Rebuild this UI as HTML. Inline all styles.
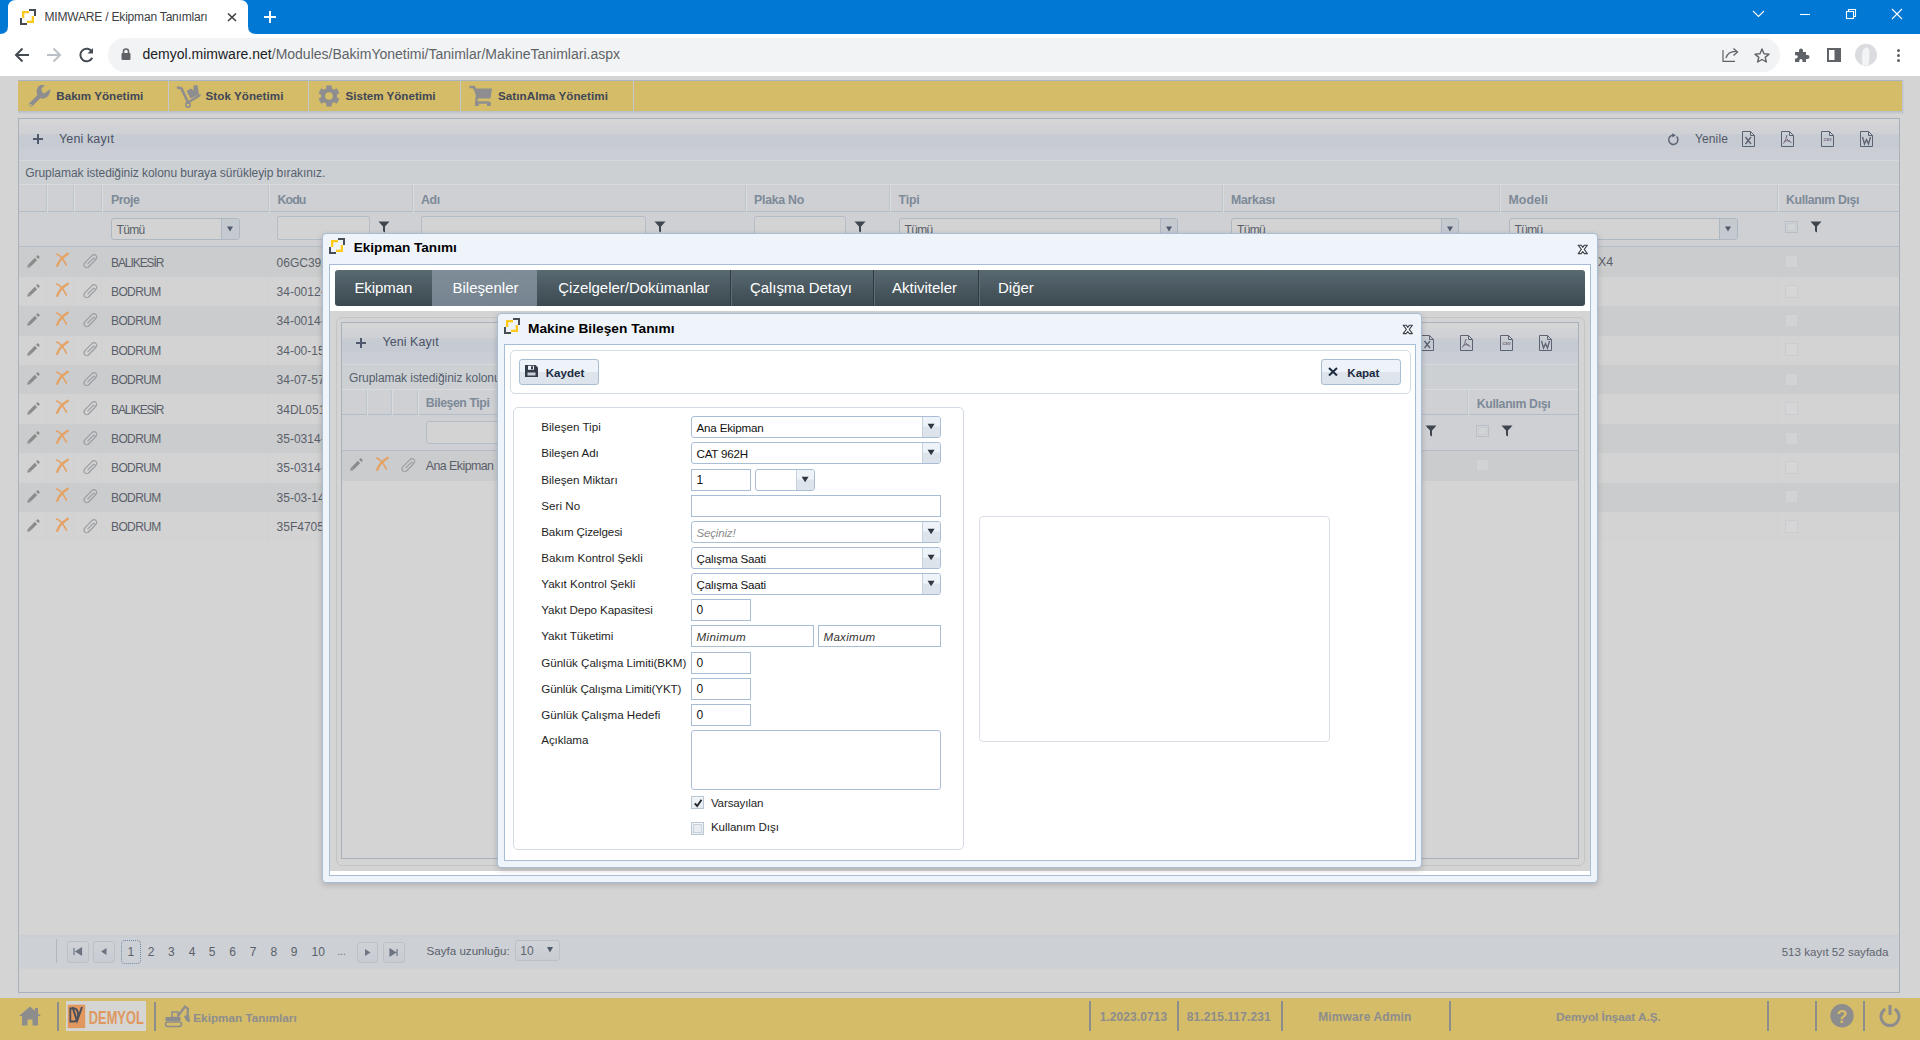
<!DOCTYPE html>
<html><head><meta charset="utf-8"><title>MIMWARE / Ekipman Tanımları</title>
<style>
*{box-sizing:border-box;margin:0;padding:0}
html,body{width:1920px;height:1040px;overflow:hidden;background:#d4d4d4;font-family:"Liberation Sans",sans-serif;position:relative}
.a{position:absolute}
.t{position:absolute;white-space:nowrap;line-height:1}
svg{overflow:visible}
</style></head><body>
<div class="a" style="left:0;top:0;width:1920px;height:34px;background:#0078d4"></div>
<svg class="a" style="left:0px;top:0px;" width="1920" height="76" viewBox="0 0 1920 76">
<path d="M0 34 Q8 34 8 26 L8 8 Q8 0 16 0 L240 0 Q248 0 248 8 L248 26 Q248 34 256 34 Z" fill="#fff"/>
<rect x="0" y="34" width="1920" height="42" fill="#fff"/>
<rect x="108" y="38" width="1672" height="34" rx="17" fill="#f1f3f4"/>
<g transform="translate(20,9)"><rect x="9" y="0" width="7" height="2" fill="#454a52"/><rect x="14" y="0" width="2" height="7" fill="#454a52"/><rect x="2" y="2" width="7" height="2.3" fill="#fdca1c"/><rect x="2" y="2" width="2.3" height="7" fill="#fdca1c"/><rect x="7" y="11.7" width="7" height="2.3" fill="#fdca1c"/><rect x="11.7" y="7" width="2.3" height="7" fill="#fdca1c"/><rect x="0" y="9" width="2" height="7" fill="#454a52"/><rect x="0" y="14" width="7" height="2" fill="#454a52"/></g>
<path d="M228 13.5 L236 21 M236 13.5 L228 21" stroke="#3c4043" stroke-width="1.6"/>
<path d="M270 11 V23 M264 17 H276" stroke="#fff" stroke-width="2"/>
<path d="M1753 11 L1758.5 16.5 L1764 11" stroke="#fff" stroke-width="1.1" fill="none"/>
<path d="M1800 14.5 H1810" stroke="#fff" stroke-width="1.1"/>
<rect x="1846.5" y="11.5" width="7" height="7" stroke="#fff" stroke-width="1.1" fill="none"/>
<path d="M1848.5 11.5 V9.5 H1855.5 V16.5 H1853.5" stroke="#fff" stroke-width="1.1" fill="none"/>
<path d="M1892 9 L1902 19 M1902 9 L1892 19" stroke="#fff" stroke-width="1.1"/>
<path d="M29 55 H16.5 M22.5 48.5 L16 55 L22.5 61.5" stroke="#454b52" stroke-width="2" fill="none"/>
<path d="M47 55 H59.5 M53.5 48.5 L60 55 L53.5 61.5" stroke="#bcc1c7" stroke-width="2" fill="none"/>
<path d="M92.2 52 A6.3 6.3 0 1 0 92.3 57.8" stroke="#454b52" stroke-width="2" fill="none"/>
<path d="M93 48 V53.5 H87.5 Z" fill="#454b52"/>
<rect x="121.5" y="53" width="9" height="7" rx="1" fill="#5f6368"/>
<path d="M123.5 53 V51.5 A2.5 2.5 0 0 1 128.5 51.5 V53" stroke="#5f6368" stroke-width="1.6" fill="none"/>
<path d="M1723 50 V61.3 H1735" stroke="#5f6368" stroke-width="1.2" fill="none"/>
<path d="M1726 58 Q1728 51 1737 51.5 M1733.5 48.5 L1737.5 52 L1733.5 55.5" stroke="#5f6368" stroke-width="1.3" fill="none"/>
<path d="M1762 49 L1764 53.7 L1769 54.1 L1765.2 57.4 L1766.4 62 L1762 59.5 L1757.6 62 L1758.8 57.4 L1755 54.1 L1760 53.7 Z" stroke="#5f6368" stroke-width="1.4" fill="none" stroke-linejoin="round"/>
<path d="M1795 52 H1799 V50.5 A1.8 1.8 0 0 1 1803 50.5 V52 H1806 V55 H1807.5 A1.8 1.8 0 0 1 1807.5 59 H1806 V62 H1802.5 V60.5 A1.6 1.6 0 0 0 1799.3 60.5 V62 H1795 V58.5 H1796.5 A1.7 1.7 0 0 0 1796.5 55.2 H1795 Z" fill="#5f6368"/>
<rect x="1828" y="49" width="12" height="12" stroke="#5f6368" stroke-width="2" fill="none"/>
<rect x="1834.5" y="48" width="6.5" height="14" fill="#5f6368"/>
<circle cx="1866" cy="54.8" r="11" fill="#dadcdf"/>
<path d="M1862.5 65 Q1861.5 58 1862.5 52 Q1863.5 47.5 1866.5 47.5 Q1869.5 48 1869.5 52 Q1869.5 57 1868.5 65 Z" fill="#f3f4f6"/>
<circle cx="1898.5" cy="50.6" r="1.5" fill="#5f6368"/>
<circle cx="1898.5" cy="55.5" r="1.5" fill="#5f6368"/>
<circle cx="1898.5" cy="60.5" r="1.5" fill="#5f6368"/>
</svg>
<div class="t " style="left:44.50px;top:10.84px;font-size:12px;color:#3c4043;font-weight:normal;font-style:normal;letter-spacing:-0.187px;">MIMWARE / Ekipman Tanımları</div>
<div class="t " style="left:142.50px;top:47.15px;font-size:14px;color:#202124;font-weight:normal;font-style:normal;letter-spacing:0.004px;">demyol.mimware.net<span style="color:#5f6368">/Modules/BakimYonetimi/Tanimlar/MakineTanimlari.aspx</span></div>
<div class="a" style="left:18px;top:80px;width:616px;height:1px;background:#a9b4c4"></div>
<div class="a" style="left:18px;top:81px;width:616px;height:30px;background:#d5bc69"></div>
<div class="a" style="left:18px;top:111px;width:616px;height:3px;background:linear-gradient(#b9bfc8,#cdd0d4)"></div>
<div class="a" style="left:168px;top:81px;width:1px;height:30px;background:#c3c7cf"></div>
<div class="a" style="left:308px;top:81px;width:1px;height:30px;background:#c3c7cf"></div>
<div class="a" style="left:460px;top:81px;width:1px;height:30px;background:#c3c7cf"></div>
<div class="a" style="left:633px;top:80px;width:1px;height:31px;background:#c3c7cf"></div>
<div class="a" style="left:634px;top:80px;width:1268px;height:1px;background:#a9b4c4"></div>
<div class="a" style="left:634px;top:81px;width:1268px;height:30px;background:#d5bc69"></div>
<div class="a" style="left:634px;top:111px;width:1268px;height:3px;background:linear-gradient(#b9bfc8,#cdd0d4)"></div>
<div class="a" style="left:1902px;top:80px;width:2px;height:34px;background:linear-gradient(90deg,#b9c0ca,#cfd2d6)"></div>
<div class="t " style="left:56.30px;top:90.18px;font-size:11.6px;color:#3f4657;font-weight:bold;font-style:normal;letter-spacing:0.016px;">Bakım Yönetimi</div>
<div class="t " style="left:205.50px;top:90.18px;font-size:11.6px;color:#3f4657;font-weight:bold;font-style:normal;letter-spacing:0.070px;">Stok Yönetimi</div>
<div class="t " style="left:345.50px;top:90.18px;font-size:11.6px;color:#3f4657;font-weight:bold;font-style:normal;letter-spacing:0.000px;">Sistem Yönetimi</div>
<div class="t " style="left:498.00px;top:90.18px;font-size:11.6px;color:#3f4657;font-weight:bold;font-style:normal;letter-spacing:0.074px;">SatınAlma Yönetimi</div>
<svg class="a" style="left:27px;top:84px;" width="24" height="24" viewBox="0 0 24 24"><path d="M4 20.5 L13 11.5" stroke="#8e8e90" stroke-width="4.2" stroke-linecap="round"/>
<circle cx="3.6" cy="21" r="1.1" fill="#d5bc69"/>
<path d="M11 13 L9.5 8 Q9.5 3 13.5 1 L18 1 L14.5 4.5 Q14.5 8.5 17 9.5 L23.5 5 Q23 11 19.5 13.5 Q16 15.5 13 14 Z" fill="#8e8e90"/></svg>
<svg class="a" style="left:177px;top:84px;" width="24" height="24" viewBox="0 0 24 24"><path d="M1 3.5 L4.5 4.5 L11 18.5" stroke="#8e8e90" stroke-width="2.6" fill="none" stroke-linecap="round"/>
<path d="M10 19 L22.5 11.5" stroke="#8e8e90" stroke-width="2.6" stroke-linecap="round"/>
<circle cx="11" cy="21" r="2.2" stroke="#8e8e90" stroke-width="1.6" fill="none"/>
<path d="M9.5 7 L14 4.5 L16.5 6.5 L16.5 1.5 L20.5 1 L22 10.5 L13.5 14.5 Z" fill="#8e8e90"/></svg>
<svg class="a" style="left:318px;top:84px;" width="22" height="24" viewBox="0 0 22 24"><g fill="#8e8e90"><circle cx="11" cy="12" r="8"/>
<rect x="8.2" y="1.5" width="5.6" height="21" />
<rect x="8.2" y="1.5" width="5.6" height="21" transform="rotate(60 11 12)"/>
<rect x="8.2" y="1.5" width="5.6" height="21" transform="rotate(-60 11 12)"/></g>
<circle cx="11" cy="12" r="3.8" fill="#d5bc69"/></svg>
<svg class="a" style="left:469px;top:85px;" width="24" height="22" viewBox="0 0 24 22"><path d="M0.5 2 H5 L6.5 6" stroke="#8e8e90" stroke-width="2.6" fill="none"/>
<path d="M5 3.5 H23 L21.5 13.5 H7.5 Z" fill="#8e8e90"/>
<path d="M7.5 12 V17.5 H20" stroke="#8e8e90" stroke-width="2.4" fill="none"/>
<rect x="6" y="17" width="3.8" height="4" fill="#8e8e90"/><rect x="18" y="17" width="3.8" height="4" fill="#8e8e90"/></svg>
<div class="a" style="left:18px;top:118px;width:1882px;height:875px;border:1px solid #a7b0bb;background:#d4d4d4"></div>
<div class="a" style="left:19px;top:119px;width:1880px;height:41px;background:linear-gradient(#d6d6d7 0,#d5d5d6 5px,#d0d2d5 7px,#cfd1d5 14px,#c7cbd2 16px,#c6cad2 28px,#cacdd4 30px,#cbced4 100%)"></div>
<div class="a" style="left:19px;top:160px;width:1880px;height:24px;background:#cdd0d3;border-top:1px solid #d6d7d8"></div>
<div class="a" style="left:19px;top:184px;width:1880px;height:28px;background:#cfd0d3;border-top:1px solid #d9dadb;border-bottom:1px solid #b3bdc8"></div>
<div class="a" style="left:19px;top:212px;width:1880px;height:35px;background:#cfd0d3;border-bottom:1px solid #b3bdc8"></div>
<svg class="a" style="left:32px;top:133px;" width="12" height="12" viewBox="0 0 12 12"><path d="M6 1 V11 M1 6 H11" stroke="#4f5a6e" stroke-width="2"/></svg>
<div class="t " style="left:59.00px;top:132.62px;font-size:12.5px;color:#4a5365;font-weight:normal;font-style:normal;letter-spacing:0.125px;">Yeni kayıt</div>
<svg class="a" style="left:1667px;top:133px;" width="13" height="13" viewBox="0 0 13 13"><path d="M9.6 3.6 A4.6 4.6 0 1 1 6.5 2.2" stroke="#5a6272" stroke-width="1.5" fill="none"/><path d="M5.2 0.2 L8.8 2.3 L5.4 4.6 Z" fill="#5a6272"/></svg>
<div class="t " style="left:1695.00px;top:133.04px;font-size:12px;color:#505869;font-weight:normal;font-style:normal;letter-spacing:0.122px;">Yenile</div>
<svg class="a" style="left:1741.5px;top:131px;" width="13" height="16" viewBox="0 0 13 16"><path d="M0.5 0.5 H8.5 L12.5 4.5 V15.5 H0.5 Z" stroke="#5b6373" stroke-width="1" fill="none"/><path d="M8.5 0.5 V4.5 H12.5" stroke="#5b6373" stroke-width="1" fill="none"/><path d="M3.5 6 L9 13 M9 6 L3.5 13" stroke="#5b6373" stroke-width="1.4"/></svg>
<svg class="a" style="left:1780.5px;top:131px;" width="13" height="16" viewBox="0 0 13 16"><path d="M0.5 0.5 H8.5 L12.5 4.5 V15.5 H0.5 Z" stroke="#5b6373" stroke-width="1" fill="none"/><path d="M8.5 0.5 V4.5 H12.5" stroke="#5b6373" stroke-width="1" fill="none"/><path d="M6 4 Q5 9 2.5 12.5 M6 8 Q7.5 11 10.5 11.5 M4 10 Q7 9.5 9 10" stroke="#6a5b70" stroke-width="0.9" fill="none"/></svg>
<svg class="a" style="left:1820.5px;top:131px;" width="13" height="16" viewBox="0 0 13 16"><path d="M0.5 0.5 H8.5 L12.5 4.5 V15.5 H0.5 Z" stroke="#5b6373" stroke-width="1" fill="none"/><path d="M8.5 0.5 V4.5 H12.5" stroke="#5b6373" stroke-width="1" fill="none"/><text x="6.5" y="10" font-size="4" text-anchor="middle" fill="#6a5b70" font-family="Liberation Sans" font-weight="bold">CSV</text></svg>
<svg class="a" style="left:1860px;top:131px;" width="13" height="16" viewBox="0 0 13 16"><path d="M0.5 0.5 H8.5 L12.5 4.5 V15.5 H0.5 Z" stroke="#5b6373" stroke-width="1" fill="none"/><path d="M8.5 0.5 V4.5 H12.5" stroke="#5b6373" stroke-width="1" fill="none"/><path d="M2.5 6 L4.5 13 L6.5 8.5 L8.5 13 L10.5 6" stroke="#5b6373" stroke-width="1.3" fill="none"/></svg>
<div class="t " style="left:25.30px;top:167.34px;font-size:12px;color:#55606e;font-weight:normal;font-style:normal;letter-spacing:-0.061px;">Gruplamak istediğiniz kolonu buraya sürükleyip bırakınız.</div>
<div class="a" style="left:46px;top:185px;width:1px;height:27px;background:#bdc5ce"></div>
<div class="a" style="left:47px;top:185px;width:1px;height:27px;background:#dadbdd"></div>
<div class="a" style="left:73px;top:185px;width:1px;height:27px;background:#bdc5ce"></div>
<div class="a" style="left:74px;top:185px;width:1px;height:27px;background:#dadbdd"></div>
<div class="a" style="left:101px;top:185px;width:1px;height:27px;background:#bdc5ce"></div>
<div class="a" style="left:102px;top:185px;width:1px;height:27px;background:#dadbdd"></div>
<div class="a" style="left:268px;top:185px;width:1px;height:27px;background:#bdc5ce"></div>
<div class="a" style="left:269px;top:185px;width:1px;height:27px;background:#dadbdd"></div>
<div class="a" style="left:412px;top:185px;width:1px;height:27px;background:#bdc5ce"></div>
<div class="a" style="left:413px;top:185px;width:1px;height:27px;background:#dadbdd"></div>
<div class="a" style="left:745px;top:185px;width:1px;height:27px;background:#bdc5ce"></div>
<div class="a" style="left:746px;top:185px;width:1px;height:27px;background:#dadbdd"></div>
<div class="a" style="left:889px;top:185px;width:1px;height:27px;background:#bdc5ce"></div>
<div class="a" style="left:890px;top:185px;width:1px;height:27px;background:#dadbdd"></div>
<div class="a" style="left:1222px;top:185px;width:1px;height:27px;background:#bdc5ce"></div>
<div class="a" style="left:1223px;top:185px;width:1px;height:27px;background:#dadbdd"></div>
<div class="a" style="left:1499px;top:185px;width:1px;height:27px;background:#bdc5ce"></div>
<div class="a" style="left:1500px;top:185px;width:1px;height:27px;background:#dadbdd"></div>
<div class="a" style="left:1777px;top:185px;width:1px;height:27px;background:#bdc5ce"></div>
<div class="a" style="left:1778px;top:185px;width:1px;height:27px;background:#dadbdd"></div>
<div class="t " style="left:111.00px;top:193.79px;font-size:12.3px;color:#7d8a98;font-weight:bold;font-style:normal;letter-spacing:-0.473px;">Proje</div>
<div class="t " style="left:277.50px;top:193.79px;font-size:12.3px;color:#7d8a98;font-weight:bold;font-style:normal;letter-spacing:-0.855px;">Kodu</div>
<div class="t " style="left:421.00px;top:193.79px;font-size:12.3px;color:#7d8a98;font-weight:bold;font-style:normal;letter-spacing:-0.271px;">Adı</div>
<div class="t " style="left:754.00px;top:193.79px;font-size:12.3px;color:#7d8a98;font-weight:bold;font-style:normal;letter-spacing:-0.244px;">Plaka No</div>
<div class="t " style="left:898.50px;top:193.79px;font-size:12.3px;color:#7d8a98;font-weight:bold;font-style:normal;letter-spacing:-0.160px;">Tipi</div>
<div class="t " style="left:1231.00px;top:193.79px;font-size:12.3px;color:#7d8a98;font-weight:bold;font-style:normal;letter-spacing:-0.259px;">Markası</div>
<div class="t " style="left:1508.50px;top:193.79px;font-size:12.3px;color:#7d8a98;font-weight:bold;font-style:normal;letter-spacing:0.091px;">Modeli</div>
<div class="t " style="left:1786.00px;top:193.79px;font-size:12.3px;color:#7d8a98;font-weight:bold;font-style:normal;letter-spacing:-0.377px;">Kullanım Dışı</div>
<div class="a" style="left:110.5px;top:217.5px;width:129.0px;height:22.0px;background:#d3d3d3;border:1px solid #aeb8c3;border-radius:3px"></div>
<div class="a" style="left:221px;top:218.5px;width:17.5px;height:20.0px;background:#c5c9d0;border-left:1px solid #aeb8c3;border-radius:0 2px 2px 0"></div>
<svg class="a" style="left:226.25px;top:224.5px;" width="8" height="8" viewBox="0 0 8 8"><path d="M1 1.5 H7 L4 6.5 Z" fill="#4f5a6a"/></svg>
<div class="t " style="left:116.50px;top:223.84px;font-size:12px;color:#5a5f6a;font-weight:normal;font-style:normal;letter-spacing:-0.672px;">Tümü</div>
<div class="a" style="left:277px;top:216px;width:92.5px;height:23.5px;background:#d3d3d3;border:1px solid #b4bcc6;border-radius:2px"></div>
<svg class="a" style="left:377.5px;top:221px;" width="12" height="12" viewBox="0 0 12 12"><path d="M0.5 0.5 H11.5 L7 5.5 V11.5 L5 10.3 V5.5 Z" fill="#3f4650"/></svg>
<div class="a" style="left:421px;top:216px;width:224.5px;height:23.5px;background:#d3d3d3;border:1px solid #b4bcc6;border-radius:2px"></div>
<svg class="a" style="left:653.5px;top:221px;" width="12" height="12" viewBox="0 0 12 12"><path d="M0.5 0.5 H11.5 L7 5.5 V11.5 L5 10.3 V5.5 Z" fill="#3f4650"/></svg>
<div class="a" style="left:753.5px;top:216px;width:92.5px;height:23.5px;background:#d3d3d3;border:1px solid #b4bcc6;border-radius:2px"></div>
<svg class="a" style="left:854px;top:221px;" width="12" height="12" viewBox="0 0 12 12"><path d="M0.5 0.5 H11.5 L7 5.5 V11.5 L5 10.3 V5.5 Z" fill="#3f4650"/></svg>
<div class="a" style="left:898.5px;top:217.5px;width:279.0px;height:22.0px;background:#d3d3d3;border:1px solid #aeb8c3;border-radius:3px"></div>
<div class="a" style="left:1159.5px;top:218.5px;width:17.0px;height:20.0px;background:#c5c9d0;border-left:1px solid #aeb8c3;border-radius:0 2px 2px 0"></div>
<svg class="a" style="left:1164.5px;top:224.5px;" width="8" height="8" viewBox="0 0 8 8"><path d="M1 1.5 H7 L4 6.5 Z" fill="#4f5a6a"/></svg>
<div class="t " style="left:904.50px;top:223.84px;font-size:12px;color:#5a5f6a;font-weight:normal;font-style:normal;letter-spacing:-0.672px;">Tümü</div>
<div class="a" style="left:1231px;top:217.5px;width:228px;height:22.0px;background:#d3d3d3;border:1px solid #aeb8c3;border-radius:3px"></div>
<div class="a" style="left:1441px;top:218.5px;width:17px;height:20.0px;background:#c5c9d0;border-left:1px solid #aeb8c3;border-radius:0 2px 2px 0"></div>
<svg class="a" style="left:1446.0px;top:224.5px;" width="8" height="8" viewBox="0 0 8 8"><path d="M1 1.5 H7 L4 6.5 Z" fill="#4f5a6a"/></svg>
<div class="t " style="left:1237.00px;top:223.84px;font-size:12px;color:#5a5f6a;font-weight:normal;font-style:normal;letter-spacing:-0.672px;">Tümü</div>
<div class="a" style="left:1508.5px;top:217.5px;width:229.0px;height:22.0px;background:#d3d3d3;border:1px solid #aeb8c3;border-radius:3px"></div>
<div class="a" style="left:1719px;top:218.5px;width:17.5px;height:20.0px;background:#c5c9d0;border-left:1px solid #aeb8c3;border-radius:0 2px 2px 0"></div>
<svg class="a" style="left:1724.25px;top:224.5px;" width="8" height="8" viewBox="0 0 8 8"><path d="M1 1.5 H7 L4 6.5 Z" fill="#4f5a6a"/></svg>
<div class="t " style="left:1514.50px;top:223.84px;font-size:12px;color:#5a5f6a;font-weight:normal;font-style:normal;letter-spacing:-0.672px;">Tümü</div>
<div class="a" style="left:1785px;top:220.5px;width:13px;height:12px;background:#cfd1d4;border:1px solid #b8bfc7"></div>
<div class="a" style="left:1787px;top:222.5px;width:9px;height:8px;border:1px solid #c6cbd1;background:#d2d4d6"></div>
<svg class="a" style="left:1809.5px;top:221px;" width="12" height="12" viewBox="0 0 12 12"><path d="M0.5 0.5 H11.5 L7 5.5 V11.5 L5 10.3 V5.5 Z" fill="#3f4650"/></svg>
<div class="a" style="left:19px;top:247px;width:1880px;height:30px;background:#cbcccd"></div>
<svg class="a" style="left:26.5px;top:254.5px;" width="13" height="13" viewBox="0 0 13 13"><path d="M2.6 10.4 L9 4" stroke="#8b8b8b" stroke-width="3.2"/><path d="M10.2 2.8 L11.8 1.2" stroke="#8b8b8b" stroke-width="3.2"/><path d="M0.2 12.8 L1.1 9.1 L3.9 11.9 Z" fill="#8b8b8b"/></svg>
<svg class="a" style="left:55px;top:253.0px;" width="14" height="14" viewBox="0 0 14 14"><path d="M2.2 12.8 Q4.5 6 12.8 0.8" stroke="#e5a265" stroke-width="2.3" fill="none" stroke-linecap="round"/><path d="M1.5 1 Q6 2 11.4 12" stroke="#e5a265" stroke-width="1.6" fill="none" stroke-linecap="round"/></svg>
<svg class="a" style="left:83px;top:254.0px;" width="16" height="15" viewBox="0 0 16 15"><g transform="translate(0.3,0) scale(1.07)"><path d="M4.3 12.6 L11.6 5.2 Q13.6 3 11.7 1.3 Q9.9 -0.3 7.8 1.8 L1.6 8 Q-0.3 10.2 1.4 12.1 Q3.2 13.8 5.3 11.8 L10.6 6.4 Q11.6 5.2 10.7 4.4 Q9.8 3.5 8.7 4.7 L4 9.4" stroke="#9a9da2" stroke-width="1.05" fill="none"/></g></svg>
<div class="t " style="left:111.00px;top:256.64px;font-size:12px;color:#5a606a;font-weight:normal;font-style:normal;letter-spacing:-1.070px;">BALIKESİR</div>
<div class="t " style="left:276.60px;top:256.64px;font-size:12px;color:#5a606a;font-weight:normal;font-style:normal;">06GC3921</div>
<div class="a" style="left:1785px;top:255.0px;width:13px;height:13px;background:#d2d3d4;border:1px solid #c8cbcf"></div>
<div class="a" style="left:19px;top:277px;width:1880px;height:29px;background:#d3d3d3"></div>
<div class="a" style="left:46px;top:277px;width:1px;height:29px;background:#d0d0d1"></div>
<div class="a" style="left:73px;top:277px;width:1px;height:29px;background:#d0d0d1"></div>
<div class="a" style="left:101px;top:277px;width:1px;height:29px;background:#d0d0d1"></div>
<div class="a" style="left:268px;top:277px;width:1px;height:29px;background:#d0d0d1"></div>
<div class="a" style="left:412px;top:277px;width:1px;height:29px;background:#d0d0d1"></div>
<div class="a" style="left:745px;top:277px;width:1px;height:29px;background:#d0d0d1"></div>
<div class="a" style="left:889px;top:277px;width:1px;height:29px;background:#d0d0d1"></div>
<div class="a" style="left:1222px;top:277px;width:1px;height:29px;background:#d0d0d1"></div>
<div class="a" style="left:1499px;top:277px;width:1px;height:29px;background:#d0d0d1"></div>
<div class="a" style="left:1777px;top:277px;width:1px;height:29px;background:#d0d0d1"></div>
<svg class="a" style="left:26.5px;top:284.0px;" width="13" height="13" viewBox="0 0 13 13"><path d="M2.6 10.4 L9 4" stroke="#8b8b8b" stroke-width="3.2"/><path d="M10.2 2.8 L11.8 1.2" stroke="#8b8b8b" stroke-width="3.2"/><path d="M0.2 12.8 L1.1 9.1 L3.9 11.9 Z" fill="#8b8b8b"/></svg>
<svg class="a" style="left:55px;top:282.5px;" width="14" height="14" viewBox="0 0 14 14"><path d="M2.2 12.8 Q4.5 6 12.8 0.8" stroke="#e5a265" stroke-width="2.3" fill="none" stroke-linecap="round"/><path d="M1.5 1 Q6 2 11.4 12" stroke="#e5a265" stroke-width="1.6" fill="none" stroke-linecap="round"/></svg>
<svg class="a" style="left:83px;top:283.5px;" width="16" height="15" viewBox="0 0 16 15"><g transform="translate(0.3,0) scale(1.07)"><path d="M4.3 12.6 L11.6 5.2 Q13.6 3 11.7 1.3 Q9.9 -0.3 7.8 1.8 L1.6 8 Q-0.3 10.2 1.4 12.1 Q3.2 13.8 5.3 11.8 L10.6 6.4 Q11.6 5.2 10.7 4.4 Q9.8 3.5 8.7 4.7 L4 9.4" stroke="#9a9da2" stroke-width="1.05" fill="none"/></g></svg>
<div class="t " style="left:111.00px;top:286.14px;font-size:12px;color:#5a606a;font-weight:normal;font-style:normal;letter-spacing:-0.607px;">BODRUM</div>
<div class="t " style="left:276.60px;top:286.14px;font-size:12px;color:#5a606a;font-weight:normal;font-style:normal;">34-0012-01</div>
<div class="a" style="left:1785px;top:284.5px;width:13px;height:13px;background:#d6d6d7;border:1px solid #c9ccd0"></div>
<div class="a" style="left:19px;top:306px;width:1880px;height:29.5px;background:#cbcccd"></div>
<svg class="a" style="left:26.5px;top:313.25px;" width="13" height="13" viewBox="0 0 13 13"><path d="M2.6 10.4 L9 4" stroke="#8b8b8b" stroke-width="3.2"/><path d="M10.2 2.8 L11.8 1.2" stroke="#8b8b8b" stroke-width="3.2"/><path d="M0.2 12.8 L1.1 9.1 L3.9 11.9 Z" fill="#8b8b8b"/></svg>
<svg class="a" style="left:55px;top:311.75px;" width="14" height="14" viewBox="0 0 14 14"><path d="M2.2 12.8 Q4.5 6 12.8 0.8" stroke="#e5a265" stroke-width="2.3" fill="none" stroke-linecap="round"/><path d="M1.5 1 Q6 2 11.4 12" stroke="#e5a265" stroke-width="1.6" fill="none" stroke-linecap="round"/></svg>
<svg class="a" style="left:83px;top:312.75px;" width="16" height="15" viewBox="0 0 16 15"><g transform="translate(0.3,0) scale(1.07)"><path d="M4.3 12.6 L11.6 5.2 Q13.6 3 11.7 1.3 Q9.9 -0.3 7.8 1.8 L1.6 8 Q-0.3 10.2 1.4 12.1 Q3.2 13.8 5.3 11.8 L10.6 6.4 Q11.6 5.2 10.7 4.4 Q9.8 3.5 8.7 4.7 L4 9.4" stroke="#9a9da2" stroke-width="1.05" fill="none"/></g></svg>
<div class="t " style="left:111.00px;top:315.39px;font-size:12px;color:#5a606a;font-weight:normal;font-style:normal;letter-spacing:-0.607px;">BODRUM</div>
<div class="t " style="left:276.60px;top:315.39px;font-size:12px;color:#5a606a;font-weight:normal;font-style:normal;">34-0014-01</div>
<div class="a" style="left:1785px;top:313.75px;width:13px;height:13px;background:#d2d3d4;border:1px solid #c8cbcf"></div>
<div class="a" style="left:19px;top:335.5px;width:1880px;height:29.5px;background:#d3d3d3"></div>
<div class="a" style="left:46px;top:335.5px;width:1px;height:29.5px;background:#d0d0d1"></div>
<div class="a" style="left:73px;top:335.5px;width:1px;height:29.5px;background:#d0d0d1"></div>
<div class="a" style="left:101px;top:335.5px;width:1px;height:29.5px;background:#d0d0d1"></div>
<div class="a" style="left:268px;top:335.5px;width:1px;height:29.5px;background:#d0d0d1"></div>
<div class="a" style="left:412px;top:335.5px;width:1px;height:29.5px;background:#d0d0d1"></div>
<div class="a" style="left:745px;top:335.5px;width:1px;height:29.5px;background:#d0d0d1"></div>
<div class="a" style="left:889px;top:335.5px;width:1px;height:29.5px;background:#d0d0d1"></div>
<div class="a" style="left:1222px;top:335.5px;width:1px;height:29.5px;background:#d0d0d1"></div>
<div class="a" style="left:1499px;top:335.5px;width:1px;height:29.5px;background:#d0d0d1"></div>
<div class="a" style="left:1777px;top:335.5px;width:1px;height:29.5px;background:#d0d0d1"></div>
<svg class="a" style="left:26.5px;top:342.75px;" width="13" height="13" viewBox="0 0 13 13"><path d="M2.6 10.4 L9 4" stroke="#8b8b8b" stroke-width="3.2"/><path d="M10.2 2.8 L11.8 1.2" stroke="#8b8b8b" stroke-width="3.2"/><path d="M0.2 12.8 L1.1 9.1 L3.9 11.9 Z" fill="#8b8b8b"/></svg>
<svg class="a" style="left:55px;top:341.25px;" width="14" height="14" viewBox="0 0 14 14"><path d="M2.2 12.8 Q4.5 6 12.8 0.8" stroke="#e5a265" stroke-width="2.3" fill="none" stroke-linecap="round"/><path d="M1.5 1 Q6 2 11.4 12" stroke="#e5a265" stroke-width="1.6" fill="none" stroke-linecap="round"/></svg>
<svg class="a" style="left:83px;top:342.25px;" width="16" height="15" viewBox="0 0 16 15"><g transform="translate(0.3,0) scale(1.07)"><path d="M4.3 12.6 L11.6 5.2 Q13.6 3 11.7 1.3 Q9.9 -0.3 7.8 1.8 L1.6 8 Q-0.3 10.2 1.4 12.1 Q3.2 13.8 5.3 11.8 L10.6 6.4 Q11.6 5.2 10.7 4.4 Q9.8 3.5 8.7 4.7 L4 9.4" stroke="#9a9da2" stroke-width="1.05" fill="none"/></g></svg>
<div class="t " style="left:111.00px;top:344.89px;font-size:12px;color:#5a606a;font-weight:normal;font-style:normal;letter-spacing:-0.607px;">BODRUM</div>
<div class="t " style="left:276.60px;top:344.89px;font-size:12px;color:#5a606a;font-weight:normal;font-style:normal;">34-00-1500</div>
<div class="a" style="left:1785px;top:343.25px;width:13px;height:13px;background:#d6d6d7;border:1px solid #c9ccd0"></div>
<div class="a" style="left:19px;top:365px;width:1880px;height:29px;background:#cbcccd"></div>
<svg class="a" style="left:26.5px;top:372.0px;" width="13" height="13" viewBox="0 0 13 13"><path d="M2.6 10.4 L9 4" stroke="#8b8b8b" stroke-width="3.2"/><path d="M10.2 2.8 L11.8 1.2" stroke="#8b8b8b" stroke-width="3.2"/><path d="M0.2 12.8 L1.1 9.1 L3.9 11.9 Z" fill="#8b8b8b"/></svg>
<svg class="a" style="left:55px;top:370.5px;" width="14" height="14" viewBox="0 0 14 14"><path d="M2.2 12.8 Q4.5 6 12.8 0.8" stroke="#e5a265" stroke-width="2.3" fill="none" stroke-linecap="round"/><path d="M1.5 1 Q6 2 11.4 12" stroke="#e5a265" stroke-width="1.6" fill="none" stroke-linecap="round"/></svg>
<svg class="a" style="left:83px;top:371.5px;" width="16" height="15" viewBox="0 0 16 15"><g transform="translate(0.3,0) scale(1.07)"><path d="M4.3 12.6 L11.6 5.2 Q13.6 3 11.7 1.3 Q9.9 -0.3 7.8 1.8 L1.6 8 Q-0.3 10.2 1.4 12.1 Q3.2 13.8 5.3 11.8 L10.6 6.4 Q11.6 5.2 10.7 4.4 Q9.8 3.5 8.7 4.7 L4 9.4" stroke="#9a9da2" stroke-width="1.05" fill="none"/></g></svg>
<div class="t " style="left:111.00px;top:374.14px;font-size:12px;color:#5a606a;font-weight:normal;font-style:normal;letter-spacing:-0.607px;">BODRUM</div>
<div class="t " style="left:276.60px;top:374.14px;font-size:12px;color:#5a606a;font-weight:normal;font-style:normal;">34-07-5700</div>
<div class="a" style="left:1785px;top:372.5px;width:13px;height:13px;background:#d2d3d4;border:1px solid #c8cbcf"></div>
<div class="a" style="left:19px;top:394px;width:1880px;height:30px;background:#d3d3d3"></div>
<div class="a" style="left:46px;top:394px;width:1px;height:30px;background:#d0d0d1"></div>
<div class="a" style="left:73px;top:394px;width:1px;height:30px;background:#d0d0d1"></div>
<div class="a" style="left:101px;top:394px;width:1px;height:30px;background:#d0d0d1"></div>
<div class="a" style="left:268px;top:394px;width:1px;height:30px;background:#d0d0d1"></div>
<div class="a" style="left:412px;top:394px;width:1px;height:30px;background:#d0d0d1"></div>
<div class="a" style="left:745px;top:394px;width:1px;height:30px;background:#d0d0d1"></div>
<div class="a" style="left:889px;top:394px;width:1px;height:30px;background:#d0d0d1"></div>
<div class="a" style="left:1222px;top:394px;width:1px;height:30px;background:#d0d0d1"></div>
<div class="a" style="left:1499px;top:394px;width:1px;height:30px;background:#d0d0d1"></div>
<div class="a" style="left:1777px;top:394px;width:1px;height:30px;background:#d0d0d1"></div>
<svg class="a" style="left:26.5px;top:401.5px;" width="13" height="13" viewBox="0 0 13 13"><path d="M2.6 10.4 L9 4" stroke="#8b8b8b" stroke-width="3.2"/><path d="M10.2 2.8 L11.8 1.2" stroke="#8b8b8b" stroke-width="3.2"/><path d="M0.2 12.8 L1.1 9.1 L3.9 11.9 Z" fill="#8b8b8b"/></svg>
<svg class="a" style="left:55px;top:400.0px;" width="14" height="14" viewBox="0 0 14 14"><path d="M2.2 12.8 Q4.5 6 12.8 0.8" stroke="#e5a265" stroke-width="2.3" fill="none" stroke-linecap="round"/><path d="M1.5 1 Q6 2 11.4 12" stroke="#e5a265" stroke-width="1.6" fill="none" stroke-linecap="round"/></svg>
<svg class="a" style="left:83px;top:401.0px;" width="16" height="15" viewBox="0 0 16 15"><g transform="translate(0.3,0) scale(1.07)"><path d="M4.3 12.6 L11.6 5.2 Q13.6 3 11.7 1.3 Q9.9 -0.3 7.8 1.8 L1.6 8 Q-0.3 10.2 1.4 12.1 Q3.2 13.8 5.3 11.8 L10.6 6.4 Q11.6 5.2 10.7 4.4 Q9.8 3.5 8.7 4.7 L4 9.4" stroke="#9a9da2" stroke-width="1.05" fill="none"/></g></svg>
<div class="t " style="left:111.00px;top:403.64px;font-size:12px;color:#5a606a;font-weight:normal;font-style:normal;letter-spacing:-1.070px;">BALIKESİR</div>
<div class="t " style="left:276.60px;top:403.64px;font-size:12px;color:#5a606a;font-weight:normal;font-style:normal;">34DL0510</div>
<div class="a" style="left:1785px;top:402.0px;width:13px;height:13px;background:#d6d6d7;border:1px solid #c9ccd0"></div>
<div class="a" style="left:19px;top:424px;width:1880px;height:29px;background:#cbcccd"></div>
<svg class="a" style="left:26.5px;top:431.0px;" width="13" height="13" viewBox="0 0 13 13"><path d="M2.6 10.4 L9 4" stroke="#8b8b8b" stroke-width="3.2"/><path d="M10.2 2.8 L11.8 1.2" stroke="#8b8b8b" stroke-width="3.2"/><path d="M0.2 12.8 L1.1 9.1 L3.9 11.9 Z" fill="#8b8b8b"/></svg>
<svg class="a" style="left:55px;top:429.5px;" width="14" height="14" viewBox="0 0 14 14"><path d="M2.2 12.8 Q4.5 6 12.8 0.8" stroke="#e5a265" stroke-width="2.3" fill="none" stroke-linecap="round"/><path d="M1.5 1 Q6 2 11.4 12" stroke="#e5a265" stroke-width="1.6" fill="none" stroke-linecap="round"/></svg>
<svg class="a" style="left:83px;top:430.5px;" width="16" height="15" viewBox="0 0 16 15"><g transform="translate(0.3,0) scale(1.07)"><path d="M4.3 12.6 L11.6 5.2 Q13.6 3 11.7 1.3 Q9.9 -0.3 7.8 1.8 L1.6 8 Q-0.3 10.2 1.4 12.1 Q3.2 13.8 5.3 11.8 L10.6 6.4 Q11.6 5.2 10.7 4.4 Q9.8 3.5 8.7 4.7 L4 9.4" stroke="#9a9da2" stroke-width="1.05" fill="none"/></g></svg>
<div class="t " style="left:111.00px;top:433.14px;font-size:12px;color:#5a606a;font-weight:normal;font-style:normal;letter-spacing:-0.607px;">BODRUM</div>
<div class="t " style="left:276.60px;top:433.14px;font-size:12px;color:#5a606a;font-weight:normal;font-style:normal;">35-0314-01</div>
<div class="a" style="left:1785px;top:431.5px;width:13px;height:13px;background:#d2d3d4;border:1px solid #c8cbcf"></div>
<div class="a" style="left:19px;top:453px;width:1880px;height:29.5px;background:#d3d3d3"></div>
<div class="a" style="left:46px;top:453px;width:1px;height:29.5px;background:#d0d0d1"></div>
<div class="a" style="left:73px;top:453px;width:1px;height:29.5px;background:#d0d0d1"></div>
<div class="a" style="left:101px;top:453px;width:1px;height:29.5px;background:#d0d0d1"></div>
<div class="a" style="left:268px;top:453px;width:1px;height:29.5px;background:#d0d0d1"></div>
<div class="a" style="left:412px;top:453px;width:1px;height:29.5px;background:#d0d0d1"></div>
<div class="a" style="left:745px;top:453px;width:1px;height:29.5px;background:#d0d0d1"></div>
<div class="a" style="left:889px;top:453px;width:1px;height:29.5px;background:#d0d0d1"></div>
<div class="a" style="left:1222px;top:453px;width:1px;height:29.5px;background:#d0d0d1"></div>
<div class="a" style="left:1499px;top:453px;width:1px;height:29.5px;background:#d0d0d1"></div>
<div class="a" style="left:1777px;top:453px;width:1px;height:29.5px;background:#d0d0d1"></div>
<svg class="a" style="left:26.5px;top:460.25px;" width="13" height="13" viewBox="0 0 13 13"><path d="M2.6 10.4 L9 4" stroke="#8b8b8b" stroke-width="3.2"/><path d="M10.2 2.8 L11.8 1.2" stroke="#8b8b8b" stroke-width="3.2"/><path d="M0.2 12.8 L1.1 9.1 L3.9 11.9 Z" fill="#8b8b8b"/></svg>
<svg class="a" style="left:55px;top:458.75px;" width="14" height="14" viewBox="0 0 14 14"><path d="M2.2 12.8 Q4.5 6 12.8 0.8" stroke="#e5a265" stroke-width="2.3" fill="none" stroke-linecap="round"/><path d="M1.5 1 Q6 2 11.4 12" stroke="#e5a265" stroke-width="1.6" fill="none" stroke-linecap="round"/></svg>
<svg class="a" style="left:83px;top:459.75px;" width="16" height="15" viewBox="0 0 16 15"><g transform="translate(0.3,0) scale(1.07)"><path d="M4.3 12.6 L11.6 5.2 Q13.6 3 11.7 1.3 Q9.9 -0.3 7.8 1.8 L1.6 8 Q-0.3 10.2 1.4 12.1 Q3.2 13.8 5.3 11.8 L10.6 6.4 Q11.6 5.2 10.7 4.4 Q9.8 3.5 8.7 4.7 L4 9.4" stroke="#9a9da2" stroke-width="1.05" fill="none"/></g></svg>
<div class="t " style="left:111.00px;top:462.39px;font-size:12px;color:#5a606a;font-weight:normal;font-style:normal;letter-spacing:-0.607px;">BODRUM</div>
<div class="t " style="left:276.60px;top:462.39px;font-size:12px;color:#5a606a;font-weight:normal;font-style:normal;">35-0314-02</div>
<div class="a" style="left:1785px;top:460.75px;width:13px;height:13px;background:#d6d6d7;border:1px solid #c9ccd0"></div>
<div class="a" style="left:19px;top:482.5px;width:1880px;height:29.5px;background:#cbcccd"></div>
<svg class="a" style="left:26.5px;top:489.75px;" width="13" height="13" viewBox="0 0 13 13"><path d="M2.6 10.4 L9 4" stroke="#8b8b8b" stroke-width="3.2"/><path d="M10.2 2.8 L11.8 1.2" stroke="#8b8b8b" stroke-width="3.2"/><path d="M0.2 12.8 L1.1 9.1 L3.9 11.9 Z" fill="#8b8b8b"/></svg>
<svg class="a" style="left:55px;top:488.25px;" width="14" height="14" viewBox="0 0 14 14"><path d="M2.2 12.8 Q4.5 6 12.8 0.8" stroke="#e5a265" stroke-width="2.3" fill="none" stroke-linecap="round"/><path d="M1.5 1 Q6 2 11.4 12" stroke="#e5a265" stroke-width="1.6" fill="none" stroke-linecap="round"/></svg>
<svg class="a" style="left:83px;top:489.25px;" width="16" height="15" viewBox="0 0 16 15"><g transform="translate(0.3,0) scale(1.07)"><path d="M4.3 12.6 L11.6 5.2 Q13.6 3 11.7 1.3 Q9.9 -0.3 7.8 1.8 L1.6 8 Q-0.3 10.2 1.4 12.1 Q3.2 13.8 5.3 11.8 L10.6 6.4 Q11.6 5.2 10.7 4.4 Q9.8 3.5 8.7 4.7 L4 9.4" stroke="#9a9da2" stroke-width="1.05" fill="none"/></g></svg>
<div class="t " style="left:111.00px;top:491.89px;font-size:12px;color:#5a606a;font-weight:normal;font-style:normal;letter-spacing:-0.607px;">BODRUM</div>
<div class="t " style="left:276.60px;top:491.89px;font-size:12px;color:#5a606a;font-weight:normal;font-style:normal;">35-03-1400</div>
<div class="a" style="left:1785px;top:490.25px;width:13px;height:13px;background:#d2d3d4;border:1px solid #c8cbcf"></div>
<div class="a" style="left:19px;top:512px;width:1880px;height:29px;background:#d3d3d3"></div>
<div class="a" style="left:46px;top:512px;width:1px;height:29px;background:#d0d0d1"></div>
<div class="a" style="left:73px;top:512px;width:1px;height:29px;background:#d0d0d1"></div>
<div class="a" style="left:101px;top:512px;width:1px;height:29px;background:#d0d0d1"></div>
<div class="a" style="left:268px;top:512px;width:1px;height:29px;background:#d0d0d1"></div>
<div class="a" style="left:412px;top:512px;width:1px;height:29px;background:#d0d0d1"></div>
<div class="a" style="left:745px;top:512px;width:1px;height:29px;background:#d0d0d1"></div>
<div class="a" style="left:889px;top:512px;width:1px;height:29px;background:#d0d0d1"></div>
<div class="a" style="left:1222px;top:512px;width:1px;height:29px;background:#d0d0d1"></div>
<div class="a" style="left:1499px;top:512px;width:1px;height:29px;background:#d0d0d1"></div>
<div class="a" style="left:1777px;top:512px;width:1px;height:29px;background:#d0d0d1"></div>
<svg class="a" style="left:26.5px;top:519.0px;" width="13" height="13" viewBox="0 0 13 13"><path d="M2.6 10.4 L9 4" stroke="#8b8b8b" stroke-width="3.2"/><path d="M10.2 2.8 L11.8 1.2" stroke="#8b8b8b" stroke-width="3.2"/><path d="M0.2 12.8 L1.1 9.1 L3.9 11.9 Z" fill="#8b8b8b"/></svg>
<svg class="a" style="left:55px;top:517.5px;" width="14" height="14" viewBox="0 0 14 14"><path d="M2.2 12.8 Q4.5 6 12.8 0.8" stroke="#e5a265" stroke-width="2.3" fill="none" stroke-linecap="round"/><path d="M1.5 1 Q6 2 11.4 12" stroke="#e5a265" stroke-width="1.6" fill="none" stroke-linecap="round"/></svg>
<svg class="a" style="left:83px;top:518.5px;" width="16" height="15" viewBox="0 0 16 15"><g transform="translate(0.3,0) scale(1.07)"><path d="M4.3 12.6 L11.6 5.2 Q13.6 3 11.7 1.3 Q9.9 -0.3 7.8 1.8 L1.6 8 Q-0.3 10.2 1.4 12.1 Q3.2 13.8 5.3 11.8 L10.6 6.4 Q11.6 5.2 10.7 4.4 Q9.8 3.5 8.7 4.7 L4 9.4" stroke="#9a9da2" stroke-width="1.05" fill="none"/></g></svg>
<div class="t " style="left:111.00px;top:521.14px;font-size:12px;color:#5a606a;font-weight:normal;font-style:normal;letter-spacing:-0.607px;">BODRUM</div>
<div class="t " style="left:276.60px;top:521.14px;font-size:12px;color:#5a606a;font-weight:normal;font-style:normal;">35F47050</div>
<div class="a" style="left:1785px;top:519.5px;width:13px;height:13px;background:#d6d6d7;border:1px solid #c9ccd0"></div>
<div class="t " style="left:1598.00px;top:256.30px;font-size:12.4px;color:#5a606a;font-weight:normal;font-style:normal;">X4</div>
<div class="a" style="left:19px;top:935px;width:1880px;height:34px;background:linear-gradient(#c9ced4,#cdd0d4 10%,#cdd0d4)"></div>
<div class="a" style="left:56px;top:939px;width:1px;height:24px;background:#b0b7bf"></div>
<div class="a" style="left:67px;top:941px;width:21.5px;height:21.5px;background:linear-gradient(#cfd2d6,#c8ccd3);border:1px solid #bac1c9;border-radius:3px"></div>
<svg class="a" style="left:67px;top:941px;" width="21.5" height="21.5" viewBox="0 0 21.5 21.5"><path d="M7 7 V14 M14.5 7 L9 10.5 L14.5 14 Z" stroke="#6d7582" stroke-width="1.2" fill="#6d7582"/></svg>
<div class="a" style="left:93px;top:941px;width:21.5px;height:21.5px;background:linear-gradient(#cfd2d6,#c8ccd3);border:1px solid #bac1c9;border-radius:3px"></div>
<svg class="a" style="left:93px;top:941px;" width="21.5" height="21.5" viewBox="0 0 21.5 21.5"><path d="M13.5 7 L8 10.5 L13.5 14 Z" fill="#6d7582"/></svg>
<div class="a" style="left:120.5px;top:940px;width:20.5px;height:23.5px;border:1px dotted #6e8aa8;border-radius:4px"></div>
<div class="t " style="left:127.45px;top:945.64px;font-size:12px;color:#5a606b;font-weight:normal;font-style:normal;">1</div>
<div class="t " style="left:147.65px;top:945.64px;font-size:12px;color:#5a606b;font-weight:normal;font-style:normal;">2</div>
<div class="t " style="left:168.05px;top:945.64px;font-size:12px;color:#5a606b;font-weight:normal;font-style:normal;">3</div>
<div class="t " style="left:188.65px;top:945.64px;font-size:12px;color:#5a606b;font-weight:normal;font-style:normal;">4</div>
<div class="t " style="left:208.65px;top:945.64px;font-size:12px;color:#5a606b;font-weight:normal;font-style:normal;">5</div>
<div class="t " style="left:229.35px;top:945.64px;font-size:12px;color:#5a606b;font-weight:normal;font-style:normal;">6</div>
<div class="t " style="left:249.65px;top:945.64px;font-size:12px;color:#5a606b;font-weight:normal;font-style:normal;">7</div>
<div class="t " style="left:270.40px;top:945.64px;font-size:12px;color:#5a606b;font-weight:normal;font-style:normal;">8</div>
<div class="t " style="left:290.65px;top:945.64px;font-size:12px;color:#5a606b;font-weight:normal;font-style:normal;">9</div>
<div class="t " style="left:311.60px;top:945.64px;font-size:12px;color:#5a606b;font-weight:normal;font-style:normal;">10</div>
<div class="t " style="left:337.50px;top:947.33px;font-size:10px;color:#6a6f78;font-weight:normal;font-style:normal;">...</div>
<div class="a" style="left:357.3px;top:941.5px;width:21px;height:21px;background:linear-gradient(#cfd2d6,#c8ccd3);border:1px solid #bac1c9;border-radius:3px"></div>
<svg class="a" style="left:357.3px;top:941.5px;" width="21" height="21" viewBox="0 0 21 21"><path d="M8 7 L13.5 10.5 L8 14 Z" fill="#6d7582"/></svg>
<div class="a" style="left:383.3px;top:941.5px;width:21.5px;height:21px;background:linear-gradient(#cfd2d6,#c8ccd3);border:1px solid #bac1c9;border-radius:3px"></div>
<svg class="a" style="left:383.3px;top:941.5px;" width="21.5" height="21" viewBox="0 0 21.5 21"><path d="M7 7 L12.5 10.5 L7 14 Z M14 7 V14" stroke="#6d7582" stroke-width="1.2" fill="#6d7582"/></svg>
<div class="t " style="left:426.60px;top:944.88px;font-size:11.6px;color:#5a606b;font-weight:normal;font-style:normal;letter-spacing:-0.010px;">Sayfa uzunluğu:</div>
<div class="a" style="left:514.5px;top:939.5px;width:45px;height:21px;background:linear-gradient(#d0d3d7,#c9cdd3);border:1px solid #bac1c9;border-radius:3px"></div>
<div class="t " style="left:520.30px;top:944.84px;font-size:12px;color:#5f6570;font-weight:normal;font-style:normal;">10</div>
<svg class="a" style="left:546px;top:946px;" width="8" height="8" viewBox="0 0 8 8"><path d="M1 1 H7 L4 6.5 Z" fill="#4f5a6a"/></svg>
<div class="t " style="left:1781.70px;top:946.18px;font-size:11.6px;color:#5f6570;font-weight:normal;font-style:normal;letter-spacing:-0.015px;">513 kayıt 52 sayfada</div>
<div class="a" style="left:0px;top:997px;width:1920px;height:1px;background:#d3d4d8"></div>
<div class="a" style="left:0px;top:998px;width:1920px;height:42px;background:#d5bc69"></div>
<svg class="a" style="left:18px;top:1005px;" width="24" height="22" viewBox="0 0 24 22"><path d="M12 1.5 L1 11 H4 V20.5 H9.5 V14.5 H14.5 V20.5 H20 V11 H23 Z" fill="#8d8d8d"/><rect x="17" y="3" width="3" height="5" fill="#8d8d8d"/></svg>
<div class="a" style="left:56.5px;top:1001.5px;width:2px;height:29.0px;background:#8d8d8d"></div>
<div class="a" style="left:154px;top:1001.5px;width:2px;height:29.0px;background:#8d8d8d"></div>
<div class="a" style="left:1088.5px;top:1001px;width:2px;height:30px;background:#8d8d8d"></div>
<div class="a" style="left:1177px;top:1001px;width:2px;height:30px;background:#8d8d8d"></div>
<div class="a" style="left:1280.5px;top:1001px;width:2px;height:30px;background:#8d8d8d"></div>
<div class="a" style="left:1448.5px;top:1001px;width:2px;height:30px;background:#8d8d8d"></div>
<div class="a" style="left:1766.5px;top:1001px;width:2px;height:30px;background:#8d8d8d"></div>
<div class="a" style="left:1814.5px;top:1001px;width:2px;height:30px;background:#8d8d8d"></div>
<div class="a" style="left:1862.5px;top:1001px;width:2px;height:30px;background:#8d8d8d"></div>
<div class="a" style="left:66px;top:1000.5px;width:80px;height:30.5px;background:#d5d5d4"></div>
<svg class="a" style="left:66px;top:1000.5px;" width="80" height="30.5" viewBox="0 0 80 30.5"><rect x="1.7" y="3.7" width="17.5" height="23.4" fill="#e0985e"/>
<path d="M4.3 7.5 H8 Q12 7.5 12 14 Q12 20.5 8 20.5 H4.3 Z" stroke="#4a4f5c" stroke-width="1.8" fill="none"/>
<path d="M6.5 6 L11 20 L16 6" stroke="#4a4f5c" stroke-width="2" fill="none"/>
<text x="22.8" y="23.4" font-family="Liberation Sans" font-weight="bold" font-size="19" fill="#e0985e" textLength="55" lengthAdjust="spacingAndGlyphs">DEMYOL</text></svg>
<svg class="a" style="left:165px;top:1005px;" width="25" height="22" viewBox="0 0 25 22"><rect x="0.5" y="17" width="16" height="4.5" rx="2.2" stroke="#8d8d8d" stroke-width="1.5" fill="none"/>
<rect x="0.5" y="12" width="15" height="4" fill="#8d8d8d"/><rect x="7" y="7" width="6" height="5.5" stroke="#8d8d8d" stroke-width="1.5" fill="none"/>
<path d="M13 11 L20 1.5 L23 4 L22.5 10" stroke="#8d8d8d" stroke-width="2.2" fill="none"/><path d="M19 11 Q21 17.5 25 17 L24 9.5 Z" fill="#8d8d8d"/></svg>
<div class="t " style="left:193.30px;top:1011.80px;font-size:11.7px;color:#8d8d8d;font-weight:bold;font-style:normal;letter-spacing:0.020px;">Ekipman Tanımları</div>
<div class="t " style="left:1099.70px;top:1010.84px;font-size:12px;color:#8d8d8d;font-weight:bold;font-style:normal;letter-spacing:0.070px;">1.2023.0713</div>
<div class="t " style="left:1186.70px;top:1010.84px;font-size:12px;color:#8d8d8d;font-weight:bold;font-style:normal;letter-spacing:0.088px;">81.215.117.231</div>
<div class="t " style="left:1318.20px;top:1010.84px;font-size:12px;color:#8d8d8d;font-weight:bold;font-style:normal;letter-spacing:0.132px;">Mimware Admin</div>
<div class="t " style="left:1556.00px;top:1011.51px;font-size:11.8px;color:#8d8d8d;font-weight:bold;font-style:normal;letter-spacing:-0.060px;">Demyol İnşaat A.Ş.</div>
<svg class="a" style="left:1830px;top:1004px;" width="24" height="24" viewBox="0 0 24 24"><circle cx="12" cy="11.7" r="11.7" fill="#8d8d8d"/><text x="12" y="18.5" text-anchor="middle" font-family="Liberation Sans" font-weight="bold" font-size="18" fill="#d5bc69">?</text></svg>
<svg class="a" style="left:1878px;top:1004px;" width="24" height="24" viewBox="0 0 24 24"><path d="M7.2 5 A9 9 0 1 0 16.8 5" stroke="#8d8d8d" stroke-width="3" fill="none"/><path d="M12 1 V11" stroke="#8d8d8d" stroke-width="3"/></svg>
<div class="a" style="left:322px;top:233px;width:1276px;height:649.5px;background:#eff4fa;border:1px solid #a7bdd6;border-radius:4px;box-shadow:0 2px 6px rgba(0,0,0,0.18)"></div>
<svg class="a" style="left:329px;top:238px;" width="16" height="16" viewBox="0 0 16 16"><rect x="9" y="0" width="7" height="2" fill="#474d55"/><rect x="14" y="0" width="2" height="7" fill="#474d55"/><rect x="2" y="2" width="7" height="2.3" fill="#fdca1c"/><rect x="2" y="2" width="2.3" height="7" fill="#fdca1c"/><rect x="7" y="11.7" width="7" height="2.3" fill="#fdca1c"/><rect x="11.7" y="7" width="2.3" height="7" fill="#fdca1c"/><rect x="0" y="9" width="2" height="7" fill="#474d55"/><rect x="0" y="14" width="7" height="2" fill="#474d55"/></svg>
<div class="t " style="left:353.75px;top:241.49px;font-size:13.6px;color:#000;font-weight:bold;font-style:normal;letter-spacing:-0.017px;">Ekipman Tanımı</div>
<svg class="a" style="left:1576.5px;top:243.5px;" width="12" height="11" viewBox="0 0 12 11"><path d="M1.2 1.2 H4.2 L5.8 3.3 L7.4 1.2 H10.4 L7.2 5.4 L10.4 9.6 H7.4 L5.8 7.5 L4.2 9.6 H1.2 L4.4 5.4 Z" stroke="#3d434b" stroke-width="1.1" fill="#fff" stroke-linejoin="round"/></svg>
<div class="a" style="left:329px;top:264px;width:1262px;height:612px;background:#fff;border:1px solid #a7bdd6"></div>
<div class="a" style="left:335px;top:270px;width:1250px;height:36px;background:linear-gradient(#5a6a72,#4a5960 50%,#3b4850);border-radius:3px"></div>
<div class="a" style="left:432px;top:270px;width:105px;height:36px;background:linear-gradient(#7d8c97,#7a8994 50%,#74838f)"></div>
<div class="a" style="left:729.5px;top:270px;width:1px;height:36px;background:#2f3a40"></div>
<div class="a" style="left:730.5px;top:270px;width:1px;height:36px;background:#5e6d75"></div>
<div class="a" style="left:872.5px;top:270px;width:1px;height:36px;background:#2f3a40"></div>
<div class="a" style="left:873.5px;top:270px;width:1px;height:36px;background:#5e6d75"></div>
<div class="a" style="left:977.5px;top:270px;width:1px;height:36px;background:#2f3a40"></div>
<div class="a" style="left:978.5px;top:270px;width:1px;height:36px;background:#5e6d75"></div>
<div class="t " style="left:354.40px;top:280.40px;font-size:15px;color:#fff;font-weight:normal;font-style:normal;letter-spacing:-0.051px;">Ekipman</div>
<div class="t " style="left:452.50px;top:280.40px;font-size:15px;color:#fff;font-weight:normal;font-style:normal;letter-spacing:0.013px;">Bileşenler</div>
<div class="t " style="left:558.30px;top:280.40px;font-size:15px;color:#fff;font-weight:normal;font-style:normal;letter-spacing:-0.021px;">Çizelgeler/Dokümanlar</div>
<div class="t " style="left:749.90px;top:280.40px;font-size:15px;color:#fff;font-weight:normal;font-style:normal;letter-spacing:-0.039px;">Çalışma Detayı</div>
<div class="t " style="left:892.00px;top:280.40px;font-size:15px;color:#fff;font-weight:normal;font-style:normal;letter-spacing:-0.003px;">Aktiviteler</div>
<div class="t " style="left:998.00px;top:280.40px;font-size:15px;color:#fff;font-weight:normal;font-style:normal;letter-spacing:-0.012px;">Diğer</div>
<div class="a" style="left:330px;top:311px;width:1260px;height:560px;background:#d4d4d4"></div>
<div class="a" style="left:335.5px;top:316.5px;width:1249px;height:549px;border:1px solid #c4c4c4;border-radius:6px"></div>
<div class="a" style="left:341px;top:322px;width:1238px;height:537px;border:1px solid #a7b0bb;background:#d4d4d4"></div>
<div class="a" style="left:342px;top:323px;width:1236px;height:41px;background:linear-gradient(#d6d6d7 0,#d5d5d6 5px,#d0d2d5 7px,#cfd1d5 14px,#c7cbd2 16px,#c6cad2 28px,#cacdd4 30px,#cbced4 100%)"></div>
<div class="a" style="left:342px;top:364px;width:1236px;height:25px;background:#cdd0d3;border-top:1px solid #d6d7d8"></div>
<div class="a" style="left:342px;top:389px;width:1236px;height:26px;background:#cfd0d3;border-top:1px solid #d9dadb;border-bottom:1px solid #b3bdc8"></div>
<div class="a" style="left:342px;top:415px;width:1236px;height:35.5px;background:#cfd0d3;border-bottom:1px solid #b3bdc8"></div>
<svg class="a" style="left:355px;top:337px;" width="12" height="12" viewBox="0 0 12 12"><path d="M6 1 V11 M1 6 H11" stroke="#4f5a6e" stroke-width="2"/></svg>
<div class="t " style="left:382.40px;top:336.32px;font-size:12.5px;color:#4a5365;font-weight:normal;font-style:normal;letter-spacing:0.056px;">Yeni Kayıt</div>
<div class="t " style="left:348.90px;top:371.84px;font-size:12px;color:#55606e;font-weight:normal;font-style:normal;letter-spacing:-0.061px;">Gruplamak istediğiniz kolonu buraya sürükleyip bırakınız.</div>
<div class="a" style="left:366px;top:390px;width:1px;height:25px;background:#bdc5ce"></div>
<div class="a" style="left:367px;top:390px;width:1px;height:25px;background:#dadbdd"></div>
<div class="a" style="left:391px;top:390px;width:1px;height:25px;background:#bdc5ce"></div>
<div class="a" style="left:392px;top:390px;width:1px;height:25px;background:#dadbdd"></div>
<div class="a" style="left:416.5px;top:390px;width:1px;height:25px;background:#bdc5ce"></div>
<div class="a" style="left:417.5px;top:390px;width:1px;height:25px;background:#dadbdd"></div>
<div class="a" style="left:1467px;top:390px;width:1px;height:25px;background:#bdc5ce"></div>
<div class="a" style="left:1468px;top:390px;width:1px;height:25px;background:#dadbdd"></div>
<div class="t " style="left:425.70px;top:397.39px;font-size:12.3px;color:#7d8a98;font-weight:bold;font-style:normal;letter-spacing:-0.425px;">Bileşen Tipi</div>
<div class="t " style="left:1476.70px;top:397.99px;font-size:12.3px;color:#7d8a98;font-weight:bold;font-style:normal;letter-spacing:-0.324px;">Kullanım Dışı</div>
<div class="a" style="left:425.5px;top:421px;width:100px;height:22.5px;background:#d3d3d3;border:1px solid #b4bcc6;border-radius:3px"></div>
<svg class="a" style="left:1424.5px;top:425px;" width="12" height="12" viewBox="0 0 12 12"><path d="M0.5 0.5 H11.5 L7 5.5 V11.5 L5 10.3 V5.5 Z" fill="#3f4650"/></svg>
<div class="a" style="left:1475.5px;top:424.5px;width:13px;height:12.5px;background:#cfd1d4;border:1px solid #b8bfc7"></div>
<div class="a" style="left:1477.5px;top:426.5px;width:9px;height:8.5px;border:1px solid #c6cbd1;background:#d2d4d6"></div>
<svg class="a" style="left:1500.5px;top:425px;" width="12" height="12" viewBox="0 0 12 12"><path d="M0.5 0.5 H11.5 L7 5.5 V11.5 L5 10.3 V5.5 Z" fill="#3f4650"/></svg>
<svg class="a" style="left:1421px;top:334.5px;" width="13" height="16" viewBox="0 0 13 16"><path d="M0.5 0.5 H8.5 L12.5 4.5 V15.5 H0.5 Z" stroke="#5b6373" stroke-width="1" fill="none"/><path d="M8.5 0.5 V4.5 H12.5" stroke="#5b6373" stroke-width="1" fill="none"/><path d="M3.5 6 L9 13 M9 6 L3.5 13" stroke="#5b6373" stroke-width="1.4"/></svg>
<svg class="a" style="left:1460px;top:334.5px;" width="13" height="16" viewBox="0 0 13 16"><path d="M0.5 0.5 H8.5 L12.5 4.5 V15.5 H0.5 Z" stroke="#5b6373" stroke-width="1" fill="none"/><path d="M8.5 0.5 V4.5 H12.5" stroke="#5b6373" stroke-width="1" fill="none"/><path d="M6 4 Q5 9 2.5 12.5 M6 8 Q7.5 11 10.5 11.5 M4 10 Q7 9.5 9 10" stroke="#6a5b70" stroke-width="0.9" fill="none"/></svg>
<svg class="a" style="left:1499.5px;top:334.5px;" width="13" height="16" viewBox="0 0 13 16"><path d="M0.5 0.5 H8.5 L12.5 4.5 V15.5 H0.5 Z" stroke="#5b6373" stroke-width="1" fill="none"/><path d="M8.5 0.5 V4.5 H12.5" stroke="#5b6373" stroke-width="1" fill="none"/><text x="6.5" y="10" font-size="4" text-anchor="middle" fill="#6a5b70" font-family="Liberation Sans" font-weight="bold">CSV</text></svg>
<svg class="a" style="left:1538.5px;top:334.5px;" width="13" height="16" viewBox="0 0 13 16"><path d="M0.5 0.5 H8.5 L12.5 4.5 V15.5 H0.5 Z" stroke="#5b6373" stroke-width="1" fill="none"/><path d="M8.5 0.5 V4.5 H12.5" stroke="#5b6373" stroke-width="1" fill="none"/><path d="M2.5 6 L4.5 13 L6.5 8.5 L8.5 13 L10.5 6" stroke="#5b6373" stroke-width="1.3" fill="none"/></svg>
<div class="a" style="left:342px;top:450.5px;width:1236px;height:30.5px;background:#cbcccd"></div>
<svg class="a" style="left:349.5px;top:458px;" width="13" height="13" viewBox="0 0 13 13"><path d="M2.6 10.4 L9 4" stroke="#8b8b8b" stroke-width="3.2"/><path d="M10.2 2.8 L11.8 1.2" stroke="#8b8b8b" stroke-width="3.2"/><path d="M0.2 12.8 L1.1 9.1 L3.9 11.9 Z" fill="#8b8b8b"/></svg>
<svg class="a" style="left:375px;top:456.5px;" width="14" height="14" viewBox="0 0 14 14"><path d="M2.2 12.8 Q4.5 6 12.8 0.8" stroke="#e5a265" stroke-width="2.3" fill="none" stroke-linecap="round"/><path d="M1.5 1 Q6 2 11.4 12" stroke="#e5a265" stroke-width="1.6" fill="none" stroke-linecap="round"/></svg>
<svg class="a" style="left:401px;top:458px;" width="16" height="15" viewBox="0 0 16 15"><g transform="translate(0.3,0) scale(1.07)"><path d="M4.3 12.6 L11.6 5.2 Q13.6 3 11.7 1.3 Q9.9 -0.3 7.8 1.8 L1.6 8 Q-0.3 10.2 1.4 12.1 Q3.2 13.8 5.3 11.8 L10.6 6.4 Q11.6 5.2 10.7 4.4 Q9.8 3.5 8.7 4.7 L4 9.4" stroke="#9a9da2" stroke-width="1.05" fill="none"/></g></svg>
<div class="t " style="left:425.70px;top:459.70px;font-size:12.4px;color:#5a606a;font-weight:normal;font-style:normal;letter-spacing:-0.537px;">Ana Ekipman</div>
<div class="a" style="left:1475.5px;top:458.5px;width:13px;height:12.5px;background:#d2d3d4;border:1px solid #c8cbcf"></div>
<div class="a" style="left:497px;top:313px;width:925px;height:554.5px;background:#eff4fa;border:1px solid #a7bdd6;border-radius:4px;box-shadow:0 2px 6px rgba(0,0,0,0.18)"></div>
<svg class="a" style="left:504px;top:318px;" width="16" height="16" viewBox="0 0 16 16"><rect x="9" y="0" width="7" height="2" fill="#474d55"/><rect x="14" y="0" width="2" height="7" fill="#474d55"/><rect x="2" y="2" width="7" height="2.3" fill="#fdca1c"/><rect x="2" y="2" width="2.3" height="7" fill="#fdca1c"/><rect x="7" y="11.7" width="7" height="2.3" fill="#fdca1c"/><rect x="11.7" y="7" width="2.3" height="7" fill="#fdca1c"/><rect x="0" y="9" width="2" height="7" fill="#474d55"/><rect x="0" y="14" width="7" height="2" fill="#474d55"/></svg>
<div class="t " style="left:528.00px;top:321.65px;font-size:13.7px;color:#000;font-weight:bold;font-style:normal;letter-spacing:0.033px;">Makine Bileşen Tanımı</div>
<svg class="a" style="left:1401.5px;top:323.5px;" width="12" height="11" viewBox="0 0 12 11"><path d="M1.2 1.2 H4.2 L5.8 3.3 L7.4 1.2 H10.4 L7.2 5.4 L10.4 9.6 H7.4 L5.8 7.5 L4.2 9.6 H1.2 L4.4 5.4 Z" stroke="#3d434b" stroke-width="1.1" fill="#fff" stroke-linejoin="round"/></svg>
<div class="a" style="left:504px;top:344px;width:912px;height:517px;background:#fff;border:1px solid #a7bdd6"></div>
<div class="a" style="left:510px;top:350px;width:901px;height:44px;border:1px solid #d3dae2;border-radius:5px"></div>
<div class="a" style="left:519px;top:359px;width:80px;height:25.5px;border:1px solid #a9bdd3;border-radius:3px;background:linear-gradient(#eef3f9 0,#eef3f9 48%,#dfe5ec 52%,#dde3ea 100%)"></div>
<svg class="a" style="left:524.5px;top:364.8px;" width="13" height="12" viewBox="0 0 13 12"><path d="M0 0 H10.5 L13 2.5 V12 H0 Z" fill="#333c48"/><rect x="3" y="0.8" width="6" height="4" fill="#eef3f9"/><rect x="6" y="1.3" width="2" height="3" fill="#333c48"/><rect x="2.5" y="7.5" width="8" height="3" fill="#c8d0da"/></svg>
<div class="t " style="left:545.70px;top:366.78px;font-size:11.6px;color:#1d2b3f;font-weight:bold;font-style:normal;letter-spacing:0.005px;">Kaydet</div>
<div class="a" style="left:1321px;top:359.3px;width:79.70000000000005px;height:25.69999999999999px;border:1px solid #a9bdd3;border-radius:3px;background:linear-gradient(#eef3f9 0,#eef3f9 48%,#dfe5ec 52%,#dde3ea 100%)"></div>
<svg class="a" style="left:1328px;top:366.5px;" width="10" height="9" viewBox="0 0 10 9"><path d="M1 1 L9 8.5 M9 1 L1 8.5" stroke="#1d2b3f" stroke-width="2"/></svg>
<div class="t " style="left:1347.30px;top:366.88px;font-size:11.6px;color:#1d2b3f;font-weight:bold;font-style:normal;letter-spacing:-0.044px;">Kapat</div>
<div class="a" style="left:513px;top:407px;width:451px;height:443px;border:1px solid #d3dae2;border-radius:5px"></div>
<div class="a" style="left:978.5px;top:515.5px;width:351px;height:226px;border:1px solid #d9dfe6;border-radius:4px"></div>
<div class="t " style="left:541.25px;top:421.28px;font-size:11.6px;color:#1e1e1e;font-weight:normal;font-style:normal;letter-spacing:0.017px;">Bileşen Tipi</div>
<div class="a" style="left:691px;top:416px;width:250px;height:22px;background:#fff;border:1px solid #a9bdd4;border-radius:3px"></div>
<div class="a" style="left:922px;top:417px;width:18px;height:20px;border-left:1px solid #c6d2df;border-radius:0 2px 2px 0;background:linear-gradient(#eef3f9 0,#eef3f9 45%,#dee4eb 50%,#dce3ea 100%)"></div>
<svg class="a" style="left:927.45px;top:423.0px;" width="8" height="8" viewBox="0 0 8 8"><path d="M0.6 0.8 H7.6 L4.1 6.3 Z" fill="#2e3640"/></svg>
<div class="t " style="left:696.50px;top:421.98px;font-size:11.6px;color:#111;font-weight:normal;font-style:normal;letter-spacing:-0.179px;">Ana Ekipman</div>
<div class="t " style="left:541.25px;top:447.28px;font-size:11.6px;color:#1e1e1e;font-weight:normal;font-style:normal;letter-spacing:-0.047px;">Bileşen Adı</div>
<div class="a" style="left:691px;top:442px;width:250px;height:22px;background:#fff;border:1px solid #a9bdd4;border-radius:3px"></div>
<div class="a" style="left:922px;top:443px;width:18px;height:20px;border-left:1px solid #c6d2df;border-radius:0 2px 2px 0;background:linear-gradient(#eef3f9 0,#eef3f9 45%,#dee4eb 50%,#dce3ea 100%)"></div>
<svg class="a" style="left:927.45px;top:449.0px;" width="8" height="8" viewBox="0 0 8 8"><path d="M0.6 0.8 H7.6 L4.1 6.3 Z" fill="#2e3640"/></svg>
<div class="t " style="left:696.50px;top:447.98px;font-size:11.6px;color:#111;font-weight:normal;font-style:normal;letter-spacing:-0.195px;">CAT 962H</div>
<div class="t " style="left:541.25px;top:474.28px;font-size:11.6px;color:#1e1e1e;font-weight:normal;font-style:normal;letter-spacing:0.031px;">Bileşen Miktarı</div>
<div class="a" style="left:691px;top:469px;width:60px;height:22px;background:#fff;border:1px solid #a9bdd4"></div>
<div class="t " style="left:696.50px;top:474.34px;font-size:12px;color:#111;font-weight:normal;font-style:normal;">1</div>
<div class="a" style="left:755px;top:469px;width:60px;height:22px;background:#fff;border:1px solid #a9bdd4;border-radius:3px"></div>
<div class="a" style="left:796px;top:470px;width:18px;height:20px;border-left:1px solid #c6d2df;border-radius:0 2px 2px 0;background:linear-gradient(#eef3f9 0,#eef3f9 45%,#dee4eb 50%,#dce3ea 100%)"></div>
<svg class="a" style="left:801.35px;top:476.0px;" width="8" height="8" viewBox="0 0 8 8"><path d="M0.6 0.8 H7.6 L4.1 6.3 Z" fill="#2e3640"/></svg>
<div class="t " style="left:541.25px;top:500.28px;font-size:11.6px;color:#1e1e1e;font-weight:normal;font-style:normal;letter-spacing:0.047px;">Seri No</div>
<div class="a" style="left:691px;top:495px;width:250px;height:22px;background:#fff;border:1px solid #a9bdd4"></div>
<div class="t " style="left:541.25px;top:526.28px;font-size:11.6px;color:#1e1e1e;font-weight:normal;font-style:normal;letter-spacing:-0.142px;">Bakım Çizelgesi</div>
<div class="a" style="left:691px;top:521px;width:250px;height:22px;background:#fff;border:1px solid #a9bdd4;border-radius:3px"></div>
<div class="a" style="left:922px;top:522px;width:18px;height:20px;border-left:1px solid #c6d2df;border-radius:0 2px 2px 0;background:linear-gradient(#eef3f9 0,#eef3f9 45%,#dee4eb 50%,#dce3ea 100%)"></div>
<svg class="a" style="left:927.45px;top:528.0px;" width="8" height="8" viewBox="0 0 8 8"><path d="M0.6 0.8 H7.6 L4.1 6.3 Z" fill="#2e3640"/></svg>
<div class="t " style="left:696.50px;top:526.98px;font-size:11.6px;color:#8c8c8c;font-weight:normal;font-style:italic;letter-spacing:-0.201px;">Seçiniz!</div>
<div class="t " style="left:541.25px;top:552.28px;font-size:11.6px;color:#1e1e1e;font-weight:normal;font-style:normal;letter-spacing:0.017px;">Bakım Kontrol Şekli</div>
<div class="a" style="left:691px;top:547px;width:250px;height:22px;background:#fff;border:1px solid #a9bdd4;border-radius:3px"></div>
<div class="a" style="left:922px;top:548px;width:18px;height:20px;border-left:1px solid #c6d2df;border-radius:0 2px 2px 0;background:linear-gradient(#eef3f9 0,#eef3f9 45%,#dee4eb 50%,#dce3ea 100%)"></div>
<svg class="a" style="left:927.45px;top:554.0px;" width="8" height="8" viewBox="0 0 8 8"><path d="M0.6 0.8 H7.6 L4.1 6.3 Z" fill="#2e3640"/></svg>
<div class="t " style="left:696.50px;top:552.98px;font-size:11.6px;color:#111;font-weight:normal;font-style:normal;letter-spacing:-0.206px;">Çalışma Saati</div>
<div class="t " style="left:541.25px;top:578.28px;font-size:11.6px;color:#1e1e1e;font-weight:normal;font-style:normal;letter-spacing:0.007px;">Yakıt Kontrol Şekli</div>
<div class="a" style="left:691px;top:573px;width:250px;height:22px;background:#fff;border:1px solid #a9bdd4;border-radius:3px"></div>
<div class="a" style="left:922px;top:574px;width:18px;height:20px;border-left:1px solid #c6d2df;border-radius:0 2px 2px 0;background:linear-gradient(#eef3f9 0,#eef3f9 45%,#dee4eb 50%,#dce3ea 100%)"></div>
<svg class="a" style="left:927.45px;top:580.0px;" width="8" height="8" viewBox="0 0 8 8"><path d="M0.6 0.8 H7.6 L4.1 6.3 Z" fill="#2e3640"/></svg>
<div class="t " style="left:696.50px;top:578.98px;font-size:11.6px;color:#111;font-weight:normal;font-style:normal;letter-spacing:-0.206px;">Çalışma Saati</div>
<div class="t " style="left:541.25px;top:604.28px;font-size:11.6px;color:#1e1e1e;font-weight:normal;font-style:normal;letter-spacing:-0.082px;">Yakıt Depo Kapasitesi</div>
<div class="a" style="left:691px;top:599px;width:60px;height:22px;background:#fff;border:1px solid #a9bdd4"></div>
<div class="t " style="left:696.50px;top:604.34px;font-size:12px;color:#111;font-weight:normal;font-style:normal;">0</div>
<div class="t " style="left:541.25px;top:630.28px;font-size:11.6px;color:#1e1e1e;font-weight:normal;font-style:normal;letter-spacing:-0.028px;">Yakıt Tüketimi</div>
<div class="a" style="left:691px;top:625px;width:123px;height:22px;background:#fff;border:1px solid #a9bdd4"></div>
<div class="t " style="left:696.50px;top:630.68px;font-size:11.6px;color:#333;font-weight:normal;font-style:italic;letter-spacing:0.353px;">Minimum</div>
<div class="a" style="left:818px;top:625px;width:123px;height:22px;background:#fff;border:1px solid #a9bdd4"></div>
<div class="t " style="left:823.50px;top:630.68px;font-size:11.6px;color:#333;font-weight:normal;font-style:italic;letter-spacing:0.250px;">Maximum</div>
<div class="t " style="left:541.25px;top:657.28px;font-size:11.6px;color:#1e1e1e;font-weight:normal;font-style:normal;letter-spacing:-0.023px;">Günlük Çalışma Limiti(BKM)</div>
<div class="a" style="left:691px;top:652px;width:60px;height:22px;background:#fff;border:1px solid #a9bdd4"></div>
<div class="t " style="left:696.50px;top:657.34px;font-size:12px;color:#111;font-weight:normal;font-style:normal;">0</div>
<div class="t " style="left:541.25px;top:683.28px;font-size:11.6px;color:#1e1e1e;font-weight:normal;font-style:normal;letter-spacing:-0.117px;">Günlük Çalışma Limiti(YKT)</div>
<div class="a" style="left:691px;top:678px;width:60px;height:22px;background:#fff;border:1px solid #a9bdd4"></div>
<div class="t " style="left:696.50px;top:683.34px;font-size:12px;color:#111;font-weight:normal;font-style:normal;">0</div>
<div class="t " style="left:541.25px;top:709.28px;font-size:11.6px;color:#1e1e1e;font-weight:normal;font-style:normal;letter-spacing:-0.010px;">Günlük Çalışma Hedefi</div>
<div class="a" style="left:691px;top:704px;width:60px;height:22px;background:#fff;border:1px solid #a9bdd4"></div>
<div class="t " style="left:696.50px;top:709.34px;font-size:12px;color:#111;font-weight:normal;font-style:normal;">0</div>
<div class="t " style="left:541.25px;top:734.38px;font-size:11.6px;color:#1e1e1e;font-weight:normal;font-style:normal;letter-spacing:-0.086px;">Açıklama</div>
<div class="a" style="left:691.2px;top:730.3px;width:249.5px;height:59.7px;background:#fff;border:1px solid #a9bdd4;border-radius:3px"></div>
<div class="a" style="left:691.4px;top:796.4px;width:12.6px;height:12.5px;border:1px solid #b9c6d4;background:linear-gradient(#f3f5f8,#e6ebf0)"></div>
<svg class="a" style="left:692px;top:797px;" width="12" height="12" viewBox="0 0 12 12"><path d="M2.8 6.3 L5.2 9 L9.5 2.8" stroke="#1f2730" stroke-width="1.9" fill="none"/></svg>
<div class="t " style="left:710.90px;top:796.98px;font-size:11.6px;color:#1e1e1e;font-weight:normal;font-style:normal;letter-spacing:-0.142px;">Varsayılan</div>
<div class="a" style="left:691.4px;top:822.2px;width:12.6px;height:12.5px;border:1px solid #b9c6d4;background:linear-gradient(#f3f5f8,#e6ebf0)"></div>
<div class="a" style="left:693.4px;top:824.2px;width:8.6px;height:8.5px;border:1px solid #c9d3de;background:#e9edf2"></div>
<div class="t " style="left:710.90px;top:821.28px;font-size:11.6px;color:#1e1e1e;font-weight:normal;font-style:normal;letter-spacing:-0.073px;">Kullanım Dışı</div>
</body></html>
